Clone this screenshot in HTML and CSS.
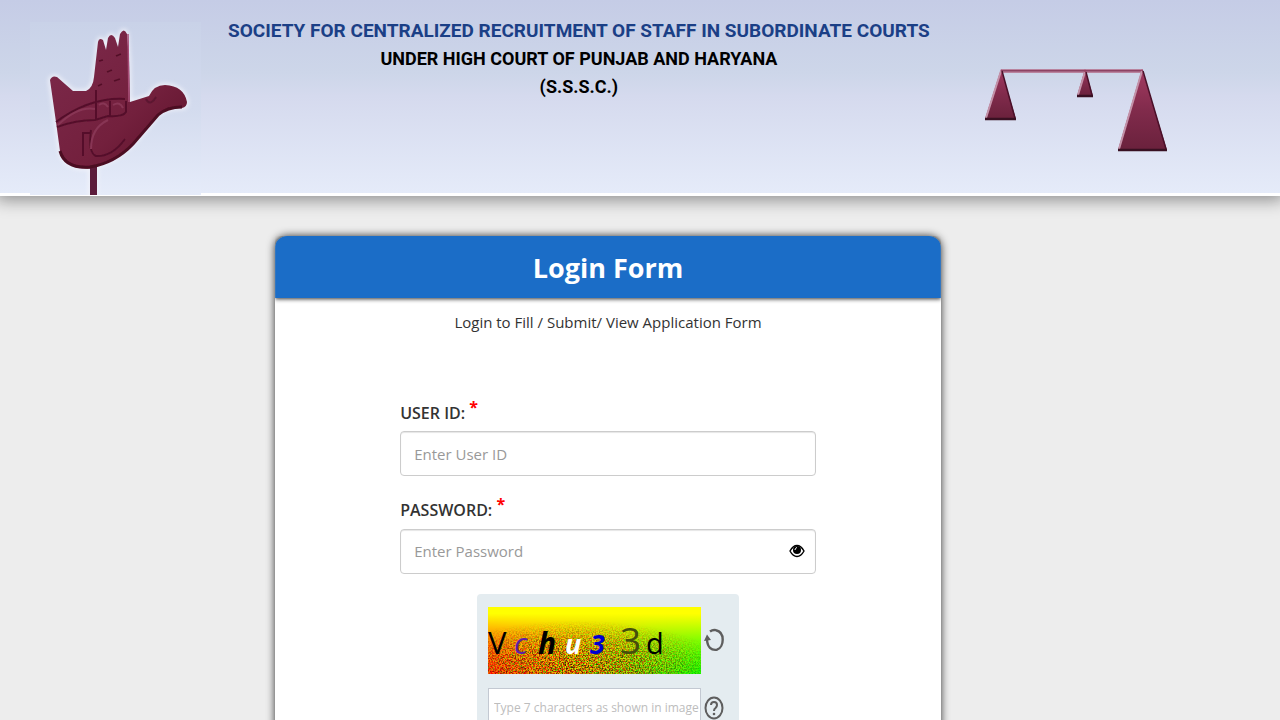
FILE: index.html
```html
<!DOCTYPE html>
<html lang="en">
<head>
<meta charset="utf-8">
<meta name="viewport" content="width=device-width, initial-scale=1">
<title>Login Form - S.S.S.C.</title>
<link rel="stylesheet" href="styles.css">
</head>
<body>
<header class="banner">
  <svg class="hand-logo" viewBox="30 22 171 173" aria-hidden="true">
    <defs>
      <linearGradient id="handFill" x1="0" y1="0" x2="1" y2="1">
        <stop offset="0" stop-color="#7d2a4c"/>
        <stop offset="0.6" stop-color="#73203d"/>
        <stop offset="1" stop-color="#5c1129"/>
      </linearGradient>
      <linearGradient id="plate" x1="0" y1="0" x2="0" y2="1">
        <stop offset="0" stop-color="#c9d2e8"/>
        <stop offset="0.5" stop-color="#d3dbee"/>
        <stop offset="1" stop-color="#e6ecfa"/>
      </linearGradient>
      <filter id="glow" x="-10%" y="-10%" width="120%" height="120%"><feGaussianBlur stdDeviation="2"/></filter>
      <filter id="soft"><feGaussianBlur stdDeviation="0.6"/></filter>
    </defs>
    <rect x="30" y="22" width="171" height="173" fill="url(#plate)"/>
    <path d="M50 80Q52 75 57 77L73 91H86Q93 88 94 77L98 42Q99 37 103 40L106 50L108 38Q111 32 115 38L118 47L120 34Q124 27 127 34L129 60L130 102L149 96Q154 85 165 85Q184 86 187 102Q187 107 182 108Q167 107 158 115Q145 131 133 144Q115 162 97 166L96 195H90V168Q65 171 60 151L56 122Z" fill="none" stroke="#f5f5fb" stroke-width="3" filter="url(#glow)"/>
    <path d="M50 80Q52 75 57 77L73 91H86Q93 88 94 77L98 42Q99 37 103 40L106 50L108 38Q111 32 115 38L118 47L120 34Q124 27 127 34L129 60L130 102L149 96Q154 85 165 85Q184 86 187 102Q187 107 182 108Q167 107 158 115Q145 131 133 144Q115 162 97 166L97 168Q65 172 60 151L56 122Z" fill="url(#handFill)"/>
    <rect x="90" y="165" width="7" height="30" fill="#5c1c3b"/>
    <path d="M128 34L129 102" fill="none" stroke="#a54c75" stroke-width="1.5"/>
    <g filter="url(#soft)">
      <path d="M60 151Q65 169 90 167Q115 163 133 144L158 115Q167 107 182 107" fill="none" stroke="#4c0b20" stroke-width="3"/>
      <path d="M56 122Q90 97 125 99M57 127Q76 120 95 120L108 116Q123 117 126 112V101M96 90V119M110 101V117M83 133V156M82 133H90M91 130Q88 153 96 156Q112 157 125 139" fill="none" stroke="#54102a" stroke-width="2"/>
      <path d="M58 125Q78 106 95 109M99 105Q104 101 108 107M113 105Q120 101 123 108M91 149Q91 128 108 120" fill="none" stroke="#883654" stroke-width="2"/>
      <path d="M146 99Q150 107 156 97" fill="none" stroke="#5c1530" stroke-width="2"/>
      <path d="M99 61L103 60M107 72L112 70M116 56L121 54M98 86L102 84M114 81L120 79" stroke="#531028" stroke-width="1.5"/>
    </g>
  </svg>
  <div class="banner-text">
    <h1 class="society">SOCIETY FOR CENTRALIZED RECRUITMENT OF STAFF IN SUBORDINATE COURTS</h1>
    <p class="court">UNDER HIGH COURT OF PUNJAB AND HARYANA</p>
    <p class="court">(S.S.S.C.)</p>
  </div>
  <svg class="scales-logo" viewBox="980 60 195 100" aria-hidden="true">
    <defs>
      <linearGradient id="panFill" x1="0" y1="0" x2="0" y2="1">
        <stop offset="0" stop-color="#a33a61"/>
        <stop offset="0.5" stop-color="#812b4c"/>
        <stop offset="1" stop-color="#6a213c"/>
      </linearGradient>
    </defs>
    <rect x="1001" y="69" width="142" height="4" fill="#b9849f"/>
    <rect x="1001" y="70" width="142" height="1.5" fill="#8d4364"/>
    <g fill="url(#panFill)">
      <path d="M1001 69L985 119H1016Z"/>
      <path d="M1085 69L1077 96H1093Z"/>
      <path d="M1142 69L1118 150H1167Z"/>
    </g>
    <path d="M1001 71L986 118M1085 72L1078 95M1142 71L1119 149" stroke="#c391a8" stroke-width="2"/>
    <path d="M1002 71L1015 118M1086 72L1092 95M1143 71L1166 149" stroke="#4a1029" stroke-width="1.5"/>
    <path d="M985 119H1016M1077 96H1093M1118 150H1167" stroke="#381022" stroke-width="2.5"/>
  </svg>
</header>
<main class="page">
  <section class="card">
    <h2 class="card-title">Login Form</h2>
    <p class="card-note">Login to Fill / Submit/ View Application Form</p>
    <form class="login">
      <div class="field">
        <label class="field-label" for="user">USER ID: <sup class="required">*</sup></label>
        <input class="text-box" id="user" type="text" placeholder="Enter User ID">
      </div>
      <div class="field">
        <label class="field-label" for="password">PASSWORD: <sup class="required">*</sup></label>
        <div class="password-wrap">
          <input class="text-box" id="password" type="password" placeholder="Enter Password">
          <button class="reveal" type="button" aria-label="Show password">
            <svg viewBox="0 0 16 14" width="16" height="14"><path d="M1 7Q4 1.500 8 1.500T15 7Q12 12.500 8 12.500T1 7Z" fill="#fff" stroke="#000" stroke-width="1.400"/><circle cx="8" cy="6" r="4" fill="#000"/><path d="M6 6Q6 4 8 3.500" fill="none" stroke="#fff" stroke-width="1"/></svg>
          </button>
        </div>
      </div>
      <div class="captcha">
        <svg class="captcha-image" viewBox="0 0 213 67" preserveAspectRatio="none" role="img" aria-label="Verification characters">
          <defs>
            <linearGradient id="across"><stop offset="0" stop-color="#f00"/><stop offset="0.25" stop-color="#e04000"/><stop offset="0.5" stop-color="#a08000"/><stop offset="0.75" stop-color="#36d800"/><stop offset="1" stop-color="#0f0"/></linearGradient>
            <linearGradient id="down" x2="0" y2="1"><stop offset="0" stop-color="#ff0"/><stop offset="0.1" stop-color="#ff0"/><stop offset="0.5" stop-color="#ff0" stop-opacity="0.5"/><stop offset="1" stop-color="#ff0" stop-opacity="0"/></linearGradient>
            <radialGradient id="grainArea" cx="0.42" cy="0.9" r="0.7"><stop offset="0" stop-color="#fff"/><stop offset="0.5" stop-color="#aaa"/><stop offset="1" stop-color="#000"/></radialGradient>
            <mask id="grainMask"><rect width="213" height="67" fill="url(#grainArea)"/></mask>
            <filter id="grain" x="0" y="0" width="100%" height="100%" color-interpolation-filters="sRGB"><feTurbulence type="fractalNoise" baseFrequency="0.7" numOctaves="2" seed="4"/><feColorMatrix values="5 0 0 0 -1.7  0 5 0 0 -2  0 0 0 0 0  0 0 0 0 1"/></filter>
          </defs>
          <rect width="213" height="67" fill="url(#across)"/>
          <rect width="213" height="67" fill="url(#down)"/>
          <g mask="url(#grainMask)"><rect width="213" height="67" filter="url(#grain)" opacity="0.7"/></g>
          <g class="captcha-chars">
            <text x="0" y="47" font-size="31">V</text>
            <text x="26" y="47" font-size="30" font-style="italic" fill="#5b1fa8">c</text>
            <text x="50" y="47" font-size="30" font-style="italic" font-weight="700">h</text>
            <text x="77" y="47" font-size="27" font-style="italic" font-weight="700" fill="#fff">u</text>
            <text x="102" y="47" font-size="27" font-style="italic" font-weight="700" fill="#0000d0">3</text>
            <text x="132" y="47" font-size="37" fill="#454f0c">3</text>
            <text x="158" y="47" font-size="29">d</text>
          </g>
        </svg>
        <button class="captcha-button" type="button" aria-label="New image">
          <svg viewBox="0 0 20 24" width="20" height="24" fill="none" stroke="#5e5e5e" stroke-width="2.400"><path d="M6 3.500Q9 1.300 12 2.200C21 4 20.500 19 13 21.700Q4 23 3 12"/><path d="M0 13L3 6.500L7 12Z" fill="#5e5e5e" stroke="none"/></svg>
        </button>
        <input class="captcha-box" type="text" placeholder="Type 7 characters as shown in image" aria-label="Type 7 characters as shown in image">
        <button class="captcha-button" type="button" aria-label="Help">
          <svg viewBox="0 0 20 24" width="20" height="24" fill="none" stroke="#5e5e5e"><ellipse cx="10" cy="12" rx="8.500" ry="10.500" stroke-width="2"/><path d="M7 9Q7 6 10 6T13 9Q13 10.500 11.500 12Q10 13 10 15" stroke-width="2"/><circle cx="10" cy="18" r="1.300" fill="#5e5e5e" stroke="none"/></svg>
        </button>
      </div>
    </form>
  </section>
</main>
</body>
</html>
```
FILE: styles.css
```css
* { box-sizing: border-box; }

body {
  margin: 0;
  background: #ededed;
  color: #333;
  font-family: "Open Sans", sans-serif;
  font-size: 15px;
}

h1, h2, p { margin: 0; }

.banner {
  display: flex;
  align-items: flex-start;
  padding-left: 30px;
  border-bottom: 3px solid #fff;
  background: linear-gradient(#c5cce6, #cdd6e9 38%, #d5daee 50%, #e5ebf9);
  box-shadow: 0 0 16px 4px rgba(0, 0, 0, 0.4);
}

.hand-logo {
  flex: none;
  width: 171px;
  height: 173px;
  margin-top: 22px;
  margin-bottom: -2px;
}

.banner-text {
  flex: none;
  margin-left: 27px;
  padding-top: 17px;
  text-align: center;
  font-family: Roboto, "Liberation Sans", sans-serif;
  font-weight: 700;
  line-height: 28px;
}

.society {
  color: #1b3f86;
  font-size: 19px;
}

.court {
  color: #000;
  font-size: 18px;
}

.scales-logo {
  flex: none;
  width: 195px;
  height: 100px;
  margin: 60px 105px 0 auto;
}

.page { padding: 40px 26.5% 0 21.5%; }

.card {
  border-radius: 12px 12px 0 0;
  background: #fff;
  box-shadow: 0 0 8px rgba(0, 0, 0, 0.8);
}

.card-title {
  padding: 10px 0 8px;
  border-radius: 12px 12px 0 0;
  background: #1b6dc7;
  box-shadow: 0 1px 4px rgba(0, 0, 0, 0.8);
  clip-path: inset(0 0 -8px);
  color: #fff;
  font-size: 27px;
  line-height: 44px;
  text-align: center;
}

.card-note {
  padding-top: 12px;
  line-height: 24px;
  text-align: center;
}

.login { padding: 65px 125px 24px; }

.field { margin-bottom: 20px; }

.field-label {
  display: block;
  padding-bottom: 5px;
  font-size: 16px;
  font-weight: 600;
  line-height: 26px;
}

.required {
  color: #f00;
  font-size: 16px;
  font-weight: 700;
  line-height: 1;
}

.text-box {
  display: block;
  width: 100%;
  height: 45px;
  padding: 0 13px;
  border: 1px solid #ccc;
  border-radius: 4px;
  background: #fff;
  box-shadow: inset 0 1px 1px rgba(0, 0, 0, 0.1);
  color: #555;
  font: inherit;
}

.text-box::placeholder { color: #999; }

.password-wrap { position: relative; }

.reveal {
  position: absolute;
  top: 0;
  right: 11px;
  display: grid;
  place-items: center;
  height: 100%;
  padding: 0;
  border: 0;
  background: none;
}

.captcha {
  display: grid;
  grid-template-columns: 213px 20px;
  gap: 14px 3px;
  align-items: center;
  width: 262px;
  margin: 0 auto;
  padding: 13px 11px;
  border-radius: 4px;
  background: #e4ecf0;
}

.captcha-image {
  width: 100%;
  height: 67px;
}

.captcha-chars { font-family: "Open Sans", sans-serif; }

.captcha-button {
  display: grid;
  place-items: center;
  padding: 0;
  border: 0;
  background: none;
}

.captcha-box {
  width: 100%;
  height: 40px;
  padding: 0 0 0 5px;
  border: 1px solid #c3c9d2;
  background: #fff;
  font: inherit;
  font-size: 12px;
}

.captcha-box::placeholder { color: #bdbdbd; }
```
